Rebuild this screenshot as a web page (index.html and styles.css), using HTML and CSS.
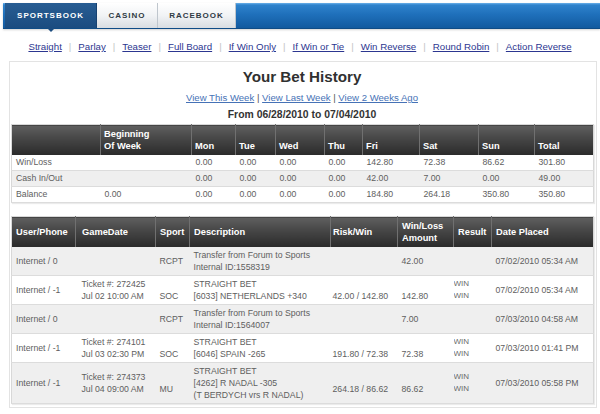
FILE: index.html
```html
<!DOCTYPE html>
<html>
<head>
<meta charset="utf-8">
<title>Your Bet History</title>
<link rel="stylesheet" href="styles.css">
</head>
<body>
<div class="topbar">
  <div class="tab tab-sports active">SPORTSBOOK</div>
  <div class="tab tab-casino">CASINO</div>
  <div class="tab tab-race">RACEBOOK</div>
</div>

<nav class="betnav">
  <a href="#">Straight</a><span class="sep">|</span><a href="#">Parlay</a><span class="sep">|</span><a href="#">Teaser</a><span class="sep">|</span><a href="#">Full Board</a><span class="sep">|</span><a href="#">If Win Only</a><span class="sep">|</span><a href="#">If Win or Tie</a><span class="sep">|</span><a href="#">Win Reverse</a><span class="sep">|</span><a href="#">Round Robin</a><span class="sep">|</span><a href="#">Action Reverse</a>
</nav>

<div class="content">
  <h1 class="title">Your Bet History</h1>
  <div class="weeks"><a href="#">View This Week</a> | <a href="#">View Last Week</a> | <a href="#">View 2 Weeks Ago</a></div>
  <div class="range">From 06/28/2010 to 07/04/2010</div>

  <table class="grid summary">
    <colgroup>
      <col class="c89"><col class="c91"><col class="c44"><col class="c40"><col class="c49"><col class="c38"><col class="c57"><col class="c59"><col class="c56"><col class="c59">
    </colgroup>
    <thead>
      <tr><th></th><th>Beginning<br>Of Week</th><th>Mon</th><th>Tue</th><th>Wed</th><th>Thu</th><th>Fri</th><th>Sat</th><th>Sun</th><th>Total</th></tr>
    </thead>
    <tbody>
      <tr><td>Win/Loss</td><td></td><td>0.00</td><td>0.00</td><td>0.00</td><td>0.00</td><td>142.80</td><td>72.38</td><td>86.62</td><td>301.80</td></tr>
      <tr><td>Cash In/Out</td><td></td><td>0.00</td><td>0.00</td><td>0.00</td><td>0.00</td><td>42.00</td><td>7.00</td><td>0.00</td><td>49.00</td></tr>
      <tr><td>Balance</td><td>0.00</td><td>0.00</td><td>0.00</td><td>0.00</td><td>0.00</td><td>184.80</td><td>264.18</td><td>350.80</td><td>350.80</td></tr>
    </tbody>
  </table>

  <table class="grid bets">
    <colgroup>
      <col class="c64"><col class="c80"><col class="c34"><col class="c141"><col class="c67"><col class="c56"><col class="c38"><col class="c102">
    </colgroup>
    <thead>
      <tr><th>User/Phone</th><th class="pl6">GameDate</th><th>Sport</th><th>Description</th><th class="pl2">Risk/Win</th><th>Win/Loss<br>Amount</th><th>Result</th><th>Date Placed</th></tr>
    </thead>
    <tbody>
      <tr class="shade">
        <td>Internet / 0</td><td class="pl6"></td><td>RCPT</td><td>Transfer from Forum to Sports<br>Internal ID:1558319</td><td class="pl2"></td><td>42.00</td><td class="res"></td><td>07/02/2010 05:34 AM</td>
      </tr>
      <tr>
        <td>Internet / -1</td><td class="pl6">Ticket #: 272425<br>Jul 02 10:00 AM</td><td class="low">SOC</td><td>STRAIGHT BET<br>[6033] NETHERLANDS +340</td><td class="low pl2">42.00 / 142.80</td><td class="low">142.80</td><td class="res">WIN<br>WIN</td><td>07/02/2010 05:34 AM</td>
      </tr>
      <tr class="shade">
        <td>Internet / 0</td><td class="pl6"></td><td>RCPT</td><td>Transfer from Forum to Sports<br>Internal ID:1564007</td><td class="pl2"></td><td>7.00</td><td class="res"></td><td>07/03/2010 04:58 AM</td>
      </tr>
      <tr>
        <td>Internet / -1</td><td class="pl6">Ticket #: 274101<br>Jul 03 02:30 PM</td><td class="low">SOC</td><td>STRAIGHT BET<br>[6046] SPAIN -265</td><td class="low pl2">191.80 / 72.38</td><td class="low">72.38</td><td class="res">WIN<br>WIN</td><td>07/03/2010 01:41 PM</td>
      </tr>
      <tr class="shade">
        <td>Internet / -1</td><td class="pl6">Ticket #: 274373<br>Jul 04 09:00 AM</td><td class="low">MU</td><td>STRAIGHT BET<br>[4262] R NADAL -305<br>(T BERDYCH vrs R NADAL)</td><td class="low pl2">264.18 / 86.62</td><td class="low">86.62</td><td class="res">WIN<br>WIN</td><td>07/03/2010 05:58 PM</td>
      </tr>
    </tbody>
  </table>
</div>
</body>
</html>
```

FILE: styles.css
```css
html, body {
  margin: 0;
  padding: 0;
  background: #ffffff;
}

body {
  font-family: "Liberation Sans", Arial, sans-serif;
  color: #333333;
}

/* ---------- top tab bar ---------- */
.topbar {
  display: flex;
  margin: 3px 0 0 3px;
  height: 25px;
  background: linear-gradient(#6cb2ea 0px, #2f83cc 2px, #1f70bb 45%, #125a9f 100%);
  border-bottom: 1px solid #0f4c86;
  box-shadow: 0 1px 2px rgba(0, 0, 0, 0.18);
}

.tab {
  display: flex;
  align-items: center;
  justify-content: center;
  font-size: 8px;
  font-weight: bold;
  letter-spacing: 1px;
  color: #2f3a44;
  background: linear-gradient(#ffffff, #f1f3f5 50%, #d9dde1);
  border-right: 1px solid #bfc6cd;
}

.tab-sports { width: 91px; margin-left: 2px; }
.tab-casino { width: 60px; }
.tab-race { width: 77px; }

.tab.active {
  position: relative;
  color: #ffffff;
  background: linear-gradient(#285d93, #1b4c80);
  border-right: 1px solid #174271;
}

.tab.active::after {
  content: "";
  position: absolute;
  left: 50%;
  bottom: -4px;
  margin-left: -4px;
  border-left: 4px solid transparent;
  border-right: 4px solid transparent;
  border-top: 4px solid #1b4c80;
}

/* ---------- bet type navigation ---------- */
.betnav {
  margin-top: 12px;
  text-align: center;
  font-size: 9.7px;
  line-height: 12px;
  white-space: nowrap;
}

.betnav a {
  color: #2c3690;
  text-decoration: underline;
}

.betnav .sep {
  color: #c4c4c4;
  margin: 0 7px;
}

/* ---------- content box ---------- */
.content {
  margin: 8px 3px 0 9px;
  border: 1px solid #e3e3e3;
  padding: 6px 3px 3px 1px;
}

.title {
  margin: 0;
  text-align: center;
  font-size: 15.2px;
  line-height: 18px;
  font-weight: bold;
  color: #303030;
}

.weeks {
  margin-top: 6px;
  text-align: center;
  font-size: 9.6px;
  line-height: 12px;
  color: #555555;
}

.weeks a {
  color: #4672b6;
  text-decoration: underline;
}

.range {
  margin-top: 4px;
  text-align: center;
  font-size: 10.4px;
  line-height: 13px;
  font-weight: bold;
  color: #333333;
}

/* ---------- tables ---------- */
.grid {
  width: 582px;
  table-layout: fixed;
  border-collapse: collapse;
  border: 1px solid #d8d8d8;
  box-shadow: 1px 1px 1px rgba(0, 0, 0, 0.08);
}

.summary { margin-top: 3px; }
.bets { margin-top: 13px; }

.grid th {
  height: 30px;
  padding: 0 3px;
  text-align: left;
  font-size: 9.3px;
  line-height: 12px;
  font-weight: bold;
  color: #ffffff;
  background: linear-gradient(#5f5f5f, #434343 50%, #2a2a2a);
  border-left: 1px solid #707070;
}

.grid th:first-child { border-left: none; }

.summary th {
  vertical-align: bottom;
  padding-bottom: 3px;
  height: 27px;
}

.bets th {
  vertical-align: middle;
  padding-left: 4px;
}

.grid td {
  padding: 2px 3px;
  font-size: 8.7px;
  line-height: 11px;
  color: #5e5e5e;
  background: #ffffff;
  border-bottom: 1px solid #dcdcdc;
  white-space: nowrap;
  overflow: hidden;
}

.summary td { padding-left: 4px; }
.summary tbody tr:nth-child(2) td { background: #efefef; }

.bets td {
  padding: 2px 4px;
  line-height: 12px;
  vertical-align: middle;
}

.bets tr.shade td { background: #efefef; }

.bets td.low { padding-top: 14px; }
.bets .pl6 { padding-left: 6px; }
.bets .pl2 { padding-left: 2px; }

.bets td.res {
  padding-left: 0;
  font-size: 8px;
  color: #6a6a6a;
}

.c89 { width: 89px; }
.c91 { width: 91px; }
.c44 { width: 44px; }
.c40 { width: 40px; }
.c49 { width: 49px; }
.c38 { width: 38px; }
.c57 { width: 57px; }
.c59 { width: 59px; }
.c56 { width: 56px; }
.c64 { width: 64px; }
.c80 { width: 80px; }
.c34 { width: 34px; }
.c141 { width: 141px; }
.c67 { width: 67px; }
.c102 { width: 102px; }
```
